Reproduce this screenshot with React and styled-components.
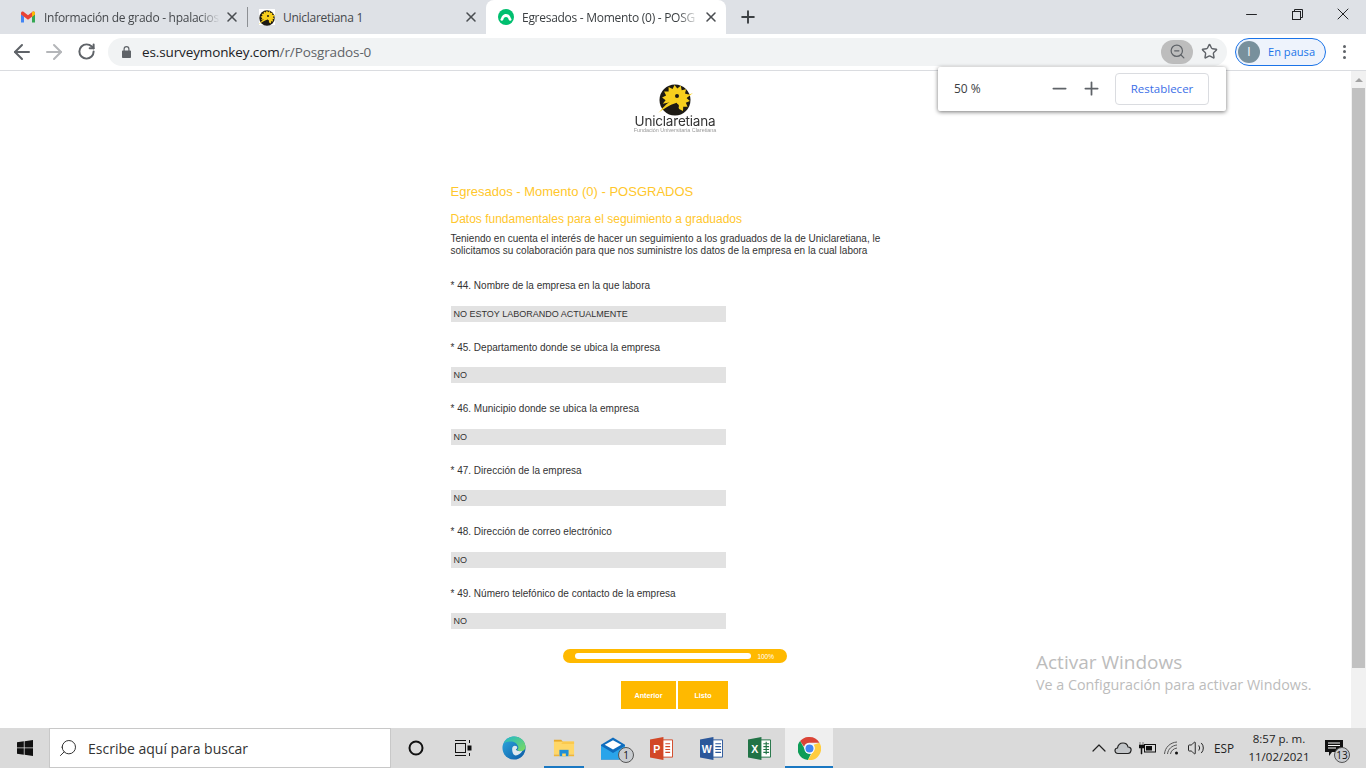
import React from "react";
import styled, { createGlobalStyle } from "styled-components";
import {
  ArrowLeft,
  ArrowRight,
  RotateCw,
  ZoomOut,
  Star,
  X,
  Plus,
  Minus,
  Search,
  ChevronUp,
  Volume2,
} from "lucide-react";

const Global = createGlobalStyle`
  html, body { margin: 0; padding: 0; height: 100%; overflow: hidden; background: #fff; }
  * { box-sizing: border-box; }
`;

const Screen = styled.div`
  position: relative;
  width: 1366px;
  height: 768px;
  display: flex;
  flex-direction: column;
  overflow: hidden;
  font-family: "Open Sans", "Noto Sans", sans-serif;
`;

/* ---------- browser chrome ---------- */
const TabStrip = styled.div`
  height: 34px;
  background: #dee1e6;
  display: flex;
  align-items: stretch;
  padding-left: 8px;
`;

const Tab = styled.div`
  width: ${(p) => p.$width}px;
  display: flex;
  align-items: center;
  padding: 0 7px 0 ${(p) => p.$pad || 12}px;
  gap: 8px;
  border-radius: 8px 8px 0 0;
  background: ${(p) => (p.$active ? "#fff" : "transparent")};
  color: ${(p) => (p.$active ? "#3c4043" : "#45484c")};
  svg.close {
    flex: none;
    color: #4a4d51;
  }
`;

const TabTitle = styled.span`
  flex: 1;
  margin-right: -4px;
  overflow: hidden;
  white-space: nowrap;
  font-size: 12px;
  letter-spacing: -0.28px;
  -webkit-mask-image: ${(p) => (p.$fade ? "linear-gradient(to right, #000 88%, transparent 100%)" : "none")};
  mask-image: ${(p) => (p.$fade ? "linear-gradient(to right, #000 88%, transparent 100%)" : "none")};
`;

const TabSeparator = styled.div`
  width: 1px;
  height: 20px;
  margin-top: 7px;
  background: #8d9094;
`;

const Favicon = styled.div`
  width: 16px;
  height: 16px;
  background: #fff;
  flex: none;
`;

const NewTab = styled.div`
  width: 44px;
  display: flex;
  align-items: center;
  justify-content: center;
  color: #3c4043;
`;

const WindowControls = styled.div`
  margin-left: auto;
  display: flex;
`;

const WindowButton = styled.div`
  width: 46px;
  height: 28px;
  display: flex;
  align-items: center;
  justify-content: center;
  color: #202124;
`;

const Toolbar = styled.div`
  height: 37px;
  background: #fff;
  border-bottom: 1px solid #dadce0;
  display: flex;
  align-items: center;
  padding: 0 0 1px 0;
`;

const NavButton = styled.div`
  width: 32px;
  display: flex;
  justify-content: center;
  color: ${(p) => (p.$disabled ? "#b4b6b9" : "#5f6368")};
`;

const NavGroup = styled.div`
  display: flex;
  align-items: center;
  padding-left: 6px;
`;

const Omnibox = styled.div`
  margin-left: 6px;
  width: 1119px;
  height: 28px;
  border-radius: 14px;
  background: #f1f3f4;
  display: flex;
  align-items: center;
  padding: 0 2px 0 14px;
  color: #5f6368;
`;

const Url = styled.div`
  margin-left: 11px;
  flex: 1;
  font-size: 13.5px;
  letter-spacing: -0.12px;
  color: #5f6368;
  b { font-weight: 400; color: #202124; }
`;

const ZoomChip = styled.div`
  width: 32px;
  height: 24px;
  border-radius: 12px;
  background: #bdbdbd;
  display: flex;
  align-items: center;
  justify-content: center;
  color: #5f6368;
`;

const StarButton = styled.div`
  width: 32px;
  display: flex;
  justify-content: center;
  color: #5f6368;
`;

const ProfileChip = styled.div`
  margin-left: 8px;
  width: 91px;
  height: 28px;
  border-radius: 14px;
  border: 1px solid #1a73e8;
  background: #eef3fc;
  display: flex;
  align-items: center;
  padding-left: 2px;
  gap: 8px;
  color: #1a73e8;
  font-size: 11.1px;
`;

const Avatar = styled.div`
  width: 22px;
  height: 22px;
  border-radius: 50%;
  background: #78909c;
  color: #fff;
  display: flex;
  align-items: center;
  justify-content: center;
  font-size: 12px;
`;

const MenuDots = styled.div`
  margin-left: 17px;
  display: flex;
  flex-direction: column;
  gap: 2.5px;
  i {
    width: 3px;
    height: 3px;
    border-radius: 50%;
    background: #5f6368;
  }
`;

const ZoomPopup = styled.div`
  position: absolute;
  left: 938px;
  top: 67px;
  width: 288px;
  height: 44px;
  background: #fff;
  border-radius: 2px;
  box-shadow: 0 1px 4px rgba(0, 0, 0, 0.55);
  display: flex;
  align-items: center;
  padding: 0 0 1px 16px;
  color: #3c4043;
  font-size: 12px;
`;

const ZoomValue = styled.span`
  width: 89px;
`;

const ZoomStep = styled.div`
  width: 32px;
  display: flex;
  justify-content: center;
  color: #5f6368;
`;

const ResetButton = styled.div`
  margin-left: 8px;
  width: 94px;
  height: 32px;
  border: 1px solid #dadce0;
  border-radius: 4px;
  display: flex;
  align-items: center;
  justify-content: center;
  color: #3b6fe7;
  font-size: 11.5px;
  font-weight: 500;
`;

/* ---------- page ---------- */
const Viewport = styled.div`
  flex: 1;
  display: flex;
  min-height: 0;
`;

const Page = styled.main`
  flex: 1;
  padding-left: 450px;
  font-family: "Liberation Sans", Arial, sans-serif;
`;

const Survey = styled.div`
  width: 450px;
`;

const Logo = styled.div`
  height: 64px;
  margin-top: 13px;
  display: flex;
  flex-direction: column;
  align-items: center;
  filter: blur(0.3px);
`;

const LogoName = styled.div`
  margin-top: -1px;
  font-family: "Inter", "Liberation Sans", sans-serif;
  font-size: 13.5px;
  line-height: 13px;
  letter-spacing: -0.2px;
  color: #333;
`;

const LogoTag = styled.div`
  font-size: 5.4px;
  line-height: 5px;
  color: #999;
  white-space: nowrap;
`;

const SurveyBody = styled.div`
  padding-left: 0.5px;
`;

const SurveyTitle = styled.h1`
  margin: 36px 0 0;
  font-size: 13px;
  line-height: 16px;
  font-weight: 400;
  color: #ffc72c;
`;

const SectionTitle = styled.h2`
  margin: 12px 0 0;
  font-size: 12px;
  line-height: 14px;
  font-weight: 400;
  color: #ffc72c;
`;

const Intro = styled.p`
  margin: 7px 0 0;
  font-size: 10px;
  line-height: 12px;
  color: #333;
  width: 440px;
`;

const Questions = styled.div`
  margin-top: 17.75px;
`;

const Question = styled.div`
  height: 61.5px;
  padding-top: 5.5px;
`;

const QuestionLabel = styled.div`
  font-size: 10px;
  line-height: 12px;
  color: #333;
`;

const Answer = styled.div`
  margin-top: 13.5px;
  width: 275.5px;
  height: 16px;
  background: #e2e2e2;
  padding-left: 3px;
  font-size: 9px;
  line-height: 16px;
  color: #333;
`;

const Progress = styled.div`
  margin: 5.25px auto 0;
  width: 224px;
  height: 14px;
  border-radius: 7px;
  background: #ffb900;
  display: flex;
  align-items: center;
  padding: 0 13px 0 12px;
  gap: 6px;
  color: #fff;
  font-size: 6.5px;
`;

const ProgressTrack = styled.div`
  flex: 1;
  height: 6px;
  border-radius: 3px;
  background: #fff;
`;

const Actions = styled.div`
  margin-top: 18px;
  padding-right: 1px;
  display: flex;
  justify-content: center;
  gap: 2px;
`;

const ActionButton = styled.div`
  width: ${(p) => p.$width}px;
  height: 28px;
  background: #ffb900;
  color: #fff;
  display: flex;
  align-items: center;
  justify-content: center;
  font-size: 7.2px;
  font-weight: 700;
`;

const Scrollbar = styled.div`
  width: 15px;
  background: #f1f1f1;
  display: flex;
  flex-direction: column;
  align-items: center;
`;

const ScrollArrow = styled.div`
  margin-top: 7px;
  width: 0;
  height: 0;
  border-left: 4px solid transparent;
  border-right: 4px solid transparent;
  border-bottom: 4px solid #a3a3a3;
`;

const ScrollThumb = styled.div`
  margin-top: 6px;
  width: 13px;
  height: 580px;
  background: #c1c1c1;
`;

const Watermark = styled.div`
  position: absolute;
  left: 1036px;
  top: 649px;
  font-family: "Open Sans", sans-serif;
  color: #bcbcbc;
  font-size: 14.3px;
  line-height: 20px;
  span {
    display: block;
    font-size: 19px;
    line-height: 26px;
  }
`;

/* ---------- taskbar ---------- */
const Taskbar = styled.footer`
  height: 40px;
  background: #dadada;
  display: flex;
  align-items: center;
`;

const StartButton = styled.div`
  width: 49px;
  display: flex;
  justify-content: center;
`;

const SearchBox = styled.div`
  width: 342px;
  height: 40px;
  background: #fff;
  border: 1px solid #c8c8c8;
  display: flex;
  align-items: center;
  padding-left: 8px;
  gap: 10px;
  color: #333;
  font-size: 14px;
`;

const TaskItem = styled.div`
  position: relative;
  width: ${(p) => p.$width || 49}px;
  margin-left: ${(p) => p.$gap || 0}px;
  height: 40px;
  display: flex;
  align-items: center;
  justify-content: center;
  background: ${(p) => (p.$active ? "#efefef" : "transparent")};
  &::after {
    content: "";
    display: ${(p) => (p.$running ? "block" : "none")};
    position: absolute;
    left: 0;
    right: 0;
    bottom: 0;
    height: 2px;
    background: #1a78c2;
  }
`;

const Badge = styled.span`
  position: absolute;
  right: ${(p) => p.$right}px;
  bottom: ${(p) => p.$bottom}px;
  width: 16px;
  height: 16px;
  border-radius: 50%;
  border: 1px solid #555;
  background: #c9ccd0;
  color: #111;
  font-size: 10px;
  line-height: 14px;
  text-align: center;
`;

const Tray = styled.div`
  margin-left: auto;
  padding-right: 15px;
  display: flex;
  align-items: center;
  height: 40px;
  color: #222;
`;

const TrayIcon = styled.div`
  width: ${(p) => p.$width || 24}px;
  display: flex;
  justify-content: center;
`;

const TrayLang = styled.div`
  width: 34px;
  text-align: center;
  font-size: 11.75px;
  color: #222;
`;

const Clock = styled.div`
  width: 76px;
  text-align: center;
  font-size: 11.5px;
  line-height: 18px;
  color: #222;
`;

const Notify = styled.div`
  position: relative;
  width: 34px;
  height: 40px;
  display: flex;
  align-items: center;
  justify-content: center;
`;

const GmailIcon = () => (
  <svg width="16" height="16" viewBox="0 0 16 16" style={{ flex: "none" }}>
    <path d="M1 13V4l7 5 7-5v9h-3V7.5L8 10.5 4 7.5V13z" fill="#fff" />
    <path d="M1 13.5h3V7.5L1 5z" fill="#4285f4" />
    <path d="M12 13.5h3V5l-3 2.5z" fill="#34a853" />
    <path d="M1 5.5V4c0-1.4 1.5-2 2.5-1.2L8 6.2l4.5-3.4C13.5 2 15 2.6 15 4v1.5l-3 2.2-4 3-4-3z" fill="#ea4335" />
    <path d="M12 7.7l3-2.2V4c0-1.4-1.5-2-2.5-1.2l-.5.4z" fill="#fbbc04" />
  </svg>
);

// sunburst points around the flower of the logo
const sunRays = Array.from({ length: 22 }, (_, i) => {
  const a = (-200 + i * 13) * (Math.PI / 180);
  const r = i % 2 ? 10.5 : 14;
  return `${(17 + r * Math.cos(a)).toFixed(1)},${(15 + r * Math.sin(a)).toFixed(1)}`;
}).join(" ");

const ClaretMark = ({ size }) => (
  <svg width={size} height={size} viewBox="0 0 32 32" style={{ overflow: "visible" }}>
    <circle cx="16" cy="16" r="15.5" fill="#1d1a14" />
    <polygon points={`17,17 ${sunRays}`} fill="#f7cf1d" />
    <ellipse cx="14" cy="22" rx="6" ry="3.2" fill="#1d1a14" />
    <circle cx="18" cy="12" r="2" fill="#1d1a14" />
    <path d="M-1 29c4-3 8-11 16-13 5-1 11-4 19-7-5 4-10 8-17 10-7 2-12 6-18 10z" fill="#f7cf1d" />
  </svg>
);

const LockIcon = () => (
  <svg width="9" height="12" viewBox="0 0 9 12" fill="#5f6368" style={{ flex: "none" }}>
    <path d="M1.500 4.500V3a3 3 0 0 1 6 0v1.500H8.200a.8.8 0 0 1 .8.8v5.900a.8.8 0 0 1-.8.8H.8a.8.8 0 0 1-.8-.8V5.300a.8.8 0 0 1 .8-.8zm1.200 0h3.600V3a1.800 1.800 0 0 0-3.600 0z" />
  </svg>
);

const SurveyMonkeyIcon = () => (
  <svg width="16" height="16" viewBox="0 0 16 16" style={{ flex: "none" }}>
    <circle cx="8" cy="8" r="8" fill="#00bf6f" />
    <path d="M3 10.500c0-3 2.200-5.500 5-5.500s5 2.500 5 5.500h-2.500C10.500 9 9.500 8 8 8s-2.500 1-2.500 2.500z" fill="#fff" />
    <circle cx="3.800" cy="10.500" r="1.300" fill="#fff" />
    <circle cx="12.200" cy="10.500" r="1.300" fill="#fff" />
  </svg>
);

const WindowsLogo = () => (
  <svg width="16" height="16" viewBox="0 0 16 16" fill="#111">
    <path d="M0 2.300L6.800 1.300V7.500H0zM7.600 1.200L16 0V7.500H7.600zM0 8.300H6.800V14.700L0 13.700zM7.600 8.300H16V16L7.600 14.800z" />
  </svg>
);

const TaskViewIcon = () => (
  <svg width="18" height="16" viewBox="0 0 18 16" fill="none" stroke="#111" strokeWidth="1">
    <path d="M1 .500h11M1 15.500h11" />
    <rect x="1.500" y="3.500" width="10" height="9" />
    <path d="M15.500 0v3M15.500 13v3" />
    <rect x="14" y="6" width="3" height="4" fill="#111" />
  </svg>
);

const EdgeIcon = () => (
  <svg width="24" height="24" viewBox="0 0 26 26">
    <defs>
      <linearGradient id="edgeA" x1="0" y1="0" x2="1" y2="1">
        <stop offset="0" stopColor="#2fa9e0" />
        <stop offset="1" stopColor="#0c59a4" />
      </linearGradient>
      <linearGradient id="edgeB" x1="0" y1="0" x2="1" y2="1">
        <stop offset="0" stopColor="#1fb8c9" />
        <stop offset="1" stopColor="#7fdc5c" />
      </linearGradient>
    </defs>
    <circle cx="13" cy="13" r="12.500" fill="url(#edgeA)" />
    <path d="M2 8C4 3 8 .500 13 .500c7 0 12.500 5 12.500 11.500 0 3-2.500 4.500-5 4.500-2 0-3.500-.8-4-1.500 1-1 1.500-2 1-3.500C16.500 8 13 6 9.500 6 6 6 3.500 6.800 2 8z" fill="url(#edgeB)" />
    <path d="M11 14c0-2 1-3.500 3-3.500 1.500 0 2.500.8 2.500 2 0 1-.8 1.800-1.500 2 1 1.500 4 2.500 7 1.500-1.500 3-4.500 5-7 5-3 0-4-4-4-7z" fill="#dfe9ee" />
  </svg>
);

const FolderIcon = () => (
  <svg width="22" height="22" viewBox="0 0 24 24">
    <path d="M1 3h8l2 2.500H1z" fill="#e8a92b" />
    <path d="M1 5h22v14H1z" fill="#ffd767" />
    <path d="M1 7.500h22V5H11L9 7.500z" fill="#fbc94d" />
    <path d="M7 14h10v7H7z" fill="#1f8ed6" />
    <path d="M10 18h4v3h-4z" fill="#ffd767" />
    <path d="M1 19h6v2H1zM17 19h6v2h-6z" fill="#f2b632" />
  </svg>
);

const MailIcon = () => (
  <svg width="24" height="23" viewBox="0 0 26 24">
    <path d="M0 8L13 0l13 8v16H0z" fill="#0f6cbd" />
    <path d="M4 8l9-5 9 5-9 5z" fill="#fff" />
    <path d="M0 9l13 8 13-8v15H0z" fill="#2aa4ea" />
  </svg>
);

const OfficeIcon = ({ color, letter, children }) => (
  <svg width="23" height="23" viewBox="0 0 24 24">
    <path d="M10 3h13.500v18H10z" fill="#fff" stroke={color} strokeWidth="1" />
    <g stroke={color} strokeWidth="1.200" fill="none">
      {children}
    </g>
    <path d="M0 2.500L14 0v24L0 21.500z" fill={color} />
    <text x="7" y="16.500" textAnchor="middle" fontFamily="Liberation Sans" fontWeight="700" fontSize="11" fill="#fff">
      {letter}
    </text>
  </svg>
);

const ChromeIcon = () => (
  <svg width="23" height="23" viewBox="0 0 24 24">
    <path d="M12 0a12 12 0 0 1 10.400 6H12a6 6 0 0 0-5.700 4.100L2.200 4.300A12 12 0 0 1 12 0z" fill="#db4437" />
    <path d="M2.200 4.300l4.800 8.200a5.500 5.500 0 0 0 6.500 4.900L10.400 23.900A12 12 0 0 1 2.200 4.300z" fill="#0f9d58" />
    <path d="M22.400 6a12 12 0 0 1-12 18l5.200-8.900A6 6 0 0 0 16.500 8z" fill="#ffcd40" />
    <circle cx="12" cy="12" r="5.400" fill="#fff" />
    <circle cx="12" cy="12" r="4.200" fill="#4285f4" />
  </svg>
);

const CloudIcon = () => (
  <svg width="18" height="14" viewBox="0 0 18 14" fill="none" stroke="#222" strokeWidth="1.200">
    <path d="M4 12.500C2 12.500 1 11 1 9.500 1 8 2.200 7 3.500 7 4 4 6 2 9 2c2.500 0 4.500 1.500 5 4 2 0 3.500 1.500 3 3.500-.3 2-1.500 3-3 3z" fill="#c2c5c8" />
  </svg>
);

const BatteryIcon = () => (
  <svg width="17" height="14" viewBox="0 0 17 14">
    <rect x="5.500" y="3.500" width="11" height="7.500" fill="none" stroke="#111" />
    <rect x="7" y="5" width="6" height="4.500" fill="#111" />
    <path d="M1 1v3M4 1v3M0 4h5v3H3v6H2V7H0z" fill="#111" stroke="#111" strokeWidth="0.500" />
  </svg>
);

const WifiIcon = () => (
  <svg width="16" height="14" viewBox="0 0 16 14" fill="none" stroke="#555" strokeWidth="1">
    <path d="M.500 13C1 6.500 6 1.500 13 1" />
    <path d="M3.500 13C4 8 8 4.500 13 4" />
    <path d="M6.500 13c.3-3 3-5.500 6.500-6" />
    <circle cx="12.500" cy="12" r="1.500" fill="#111" stroke="none" />
  </svg>
);

const NotifyIcon = () => (
  <svg width="18" height="16" viewBox="0 0 18 16">
    <path d="M0 0h18v12H7l-3 4v-4H0z" fill="#111" />
    <path d="M3 3h12M3 5.500h12M3 8h8" stroke="#fff" strokeWidth="1" />
  </svg>
);

const questions = [
  ["* 44. Nombre de la empresa en la que labora", "NO ESTOY LABORANDO ACTUALMENTE"],
  ["* 45. Departamento donde se ubica la empresa", "NO"],
  ["* 46. Municipio donde se ubica la empresa", "NO"],
  ["* 47. Dirección de la empresa", "NO"],
  ["* 48. Dirección de correo electrónico", "NO"],
  ["* 49. Número telefónico de contacto de la empresa", "NO"],
];

export default function App() {
  return (
    <Screen>
      <Global />
      <TabStrip>
        <Tab $width={239}>
          <GmailIcon />
          <TabTitle $fade>Información de grado - hpalacios</TabTitle>
          <X className="close" size={16} strokeWidth={2.300} />
        </Tab>
        <TabSeparator />
        <Tab $width={238} $pad={11}>
          <Favicon>
            <ClaretMark size={16} />
          </Favicon>
          <TabTitle>Uniclaretiana 1</TabTitle>
          <X className="close" size={16} strokeWidth={2.300} />
        </Tab>
        <Tab $width={240} $active>
          <SurveyMonkeyIcon />
          <TabTitle $fade>Egresados - Momento (0) - POSG</TabTitle>
          <X className="close" size={16} strokeWidth={2.300} />
        </Tab>
        <NewTab>
          <Plus size={20} strokeWidth={2.300} />
        </NewTab>
        <WindowControls>
          <WindowButton>
            <Minus size={17} strokeWidth={1.400} />
          </WindowButton>
          <WindowButton>
            <svg width="11" height="11" viewBox="0 0 11 11" fill="none" stroke="#202124">
              <path d="M2.500 2.500V.500h8v8h-2" />
              <rect x=".5" y="2.500" width="8" height="8" />
            </svg>
          </WindowButton>
          <WindowButton>
            <X size={20} strokeWidth={1.200} />
          </WindowButton>
        </WindowControls>
      </TabStrip>

      <Toolbar>
        <NavGroup>
          <NavButton>
            <ArrowLeft size={24} strokeWidth={2} />
          </NavButton>
          <NavButton $disabled>
            <ArrowRight size={24} strokeWidth={2} />
          </NavButton>
          <NavButton>
            <RotateCw size={19} strokeWidth={2.500} />
          </NavButton>
        </NavGroup>
        <Omnibox>
          <LockIcon />
          <Url>
            <b>es.surveymonkey.com</b>/r/Posgrados-0
          </Url>
          <ZoomChip>
            <ZoomOut size={17} strokeWidth={1.700} />
          </ZoomChip>
          <StarButton>
            <Star size={17} strokeWidth={2} />
          </StarButton>
        </Omnibox>
        <ProfileChip>
          <Avatar>I</Avatar>
          En pausa
        </ProfileChip>
        <MenuDots>
          <i />
          <i />
          <i />
        </MenuDots>
      </Toolbar>

      <Viewport>
        <Page>
          <Survey>
            <Logo>
              <ClaretMark size={32} />
              <LogoName>Uniclaretiana</LogoName>
              <LogoTag>Fundación Universitaria Claretiana</LogoTag>
            </Logo>
            <SurveyBody>
              <SurveyTitle>Egresados - Momento (0) - POSGRADOS</SurveyTitle>
              <SectionTitle>Datos fundamentales para el seguimiento a graduados</SectionTitle>
              <Intro>
                Teniendo en cuenta el interés de hacer un seguimiento a los graduados de la de Uniclaretiana, le
                solicitamos su colaboración para que nos suministre los datos de la empresa en la cual labora
              </Intro>
              <Questions>
                {questions.map(([label, value]) => (
                  <Question key={label}>
                    <QuestionLabel>{label}</QuestionLabel>
                    <Answer>{value}</Answer>
                  </Question>
                ))}
              </Questions>
            </SurveyBody>
            <Progress>
              <ProgressTrack />
              100%
            </Progress>
            <Actions>
              <ActionButton $width={55}>Anterior</ActionButton>
              <ActionButton $width={50}>Listo</ActionButton>
            </Actions>
          </Survey>
        </Page>
        <Scrollbar>
          <ScrollArrow />
          <ScrollThumb />
        </Scrollbar>
      </Viewport>

      <Taskbar>
        <StartButton>
          <WindowsLogo />
        </StartButton>
        <SearchBox>
          <Search size={20} strokeWidth={1.200} style={{ transform: "scaleX(-1)" }} />
          Escribe aquí para buscar
        </SearchBox>
        <TaskItem $width={50}>
          <svg width="16" height="16" viewBox="0 0 16 16" fill="none" stroke="#111" strokeWidth="2">
            <circle cx="8" cy="8" r="6.500" />
          </svg>
        </TaskItem>
        <TaskItem $width={44}>
          <TaskViewIcon />
        </TaskItem>
        <TaskItem $width={58}>
          <EdgeIcon />
        </TaskItem>
        <TaskItem $width={40} $gap={1} $running>
          <FolderIcon />
        </TaskItem>
        <TaskItem $width={46} $gap={6}>
          <MailIcon />
          <Badge $right={2} $bottom={5}>
            1
          </Badge>
        </TaskItem>
        <TaskItem $width={50}>
          <OfficeIcon color="#d24726" letter="P">
            <path d="M16 7h5M16 10h5M16 13h5M16 16h5" />
          </OfficeIcon>
        </TaskItem>
        <TaskItem $width={50}>
          <OfficeIcon color="#2b579a" letter="W">
            <path d="M16 7h6M16 10h6M16 13h6M16 16h6" />
          </OfficeIcon>
        </TaskItem>
        <TaskItem $width={47}>
          <OfficeIcon color="#217346" letter="X">
            <path d="M16 7h6M16 10h6M16 13h6M16 16h6M19 5v13" />
          </OfficeIcon>
        </TaskItem>
        <TaskItem $width={48} $gap={2} $active $running>
          <ChromeIcon />
        </TaskItem>
        <Tray>
          <TrayIcon>
            <ChevronUp size={24} strokeWidth={1.200} />
          </TrayIcon>
          <TrayIcon>
            <CloudIcon />
          </TrayIcon>
          <TrayIcon>
            <BatteryIcon />
          </TrayIcon>
          <TrayIcon $width={25}>
            <WifiIcon />
          </TrayIcon>
          <TrayIcon $width={23}>
            <Volume2 size={18} strokeWidth={1.300} />
          </TrayIcon>
          <TrayLang>ESP</TrayLang>
          <Clock>
            8:57 p. m.
            <br />
            11/02/2021
          </Clock>
          <Notify>
            <NotifyIcon />
            <Badge $right={1} $bottom={5}>
              13
            </Badge>
          </Notify>
        </Tray>
      </Taskbar>

      <ZoomPopup>
        <ZoomValue>50 %</ZoomValue>
        <ZoomStep>
          <Minus size={21} strokeWidth={2} />
        </ZoomStep>
        <ZoomStep>
          <Plus size={21} strokeWidth={2} />
        </ZoomStep>
        <ResetButton>Restablecer</ResetButton>
      </ZoomPopup>

      <Watermark>
        <span>Activar Windows</span>
        Ve a Configuración para activar Windows.
      </Watermark>
    </Screen>
  );
}
